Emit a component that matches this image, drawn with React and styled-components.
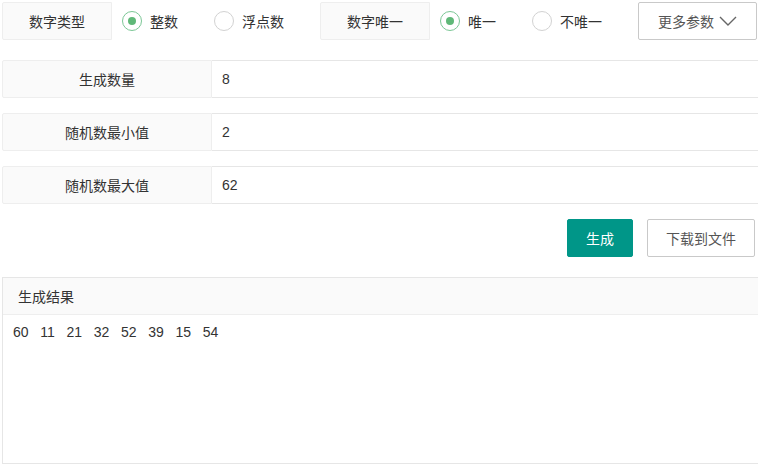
import React from "react";
import styled, { createGlobalStyle } from "styled-components";

const Global = createGlobalStyle`
  html, body { margin: 0; padding: 0; background: #fff; overflow: hidden; }
  body { font-family: "Liberation Sans", "Noto Sans CJK SC", sans-serif; font-size: 14px; color: #333; }
  * { box-sizing: border-box; }
`;

const Page = styled.div`
  width: 758px;
  height: 467px;
  padding: 2px 2px 0 2px;
  overflow: hidden;
`;

const Toolbar = styled.div`
  display: flex;
  align-items: center;
  height: 38px;
`;

const Label = styled.div`
  display: flex;
  align-items: center;
  justify-content: center;
  width: ${(p) => p.$w || 110}px;
  height: 38px;
  flex-shrink: 0;
  margin-left: ${(p) => p.$ml || 0}px;
  background: #fafafa;
  border: 1px solid #eee;
  border-radius: 2px 0 0 2px;
  color: #333;
`;

const RadioItem = styled.div`
  display: flex;
  align-items: center;
  margin: 0 26px 0 10px;
  color: #333;
  white-space: nowrap;
`;

const RadioIcon = styled.span`
  width: 20px;
  height: 20px;
  border-radius: 50%;
  border: 1.5px solid ${(p) => (p.$on ? "#7cc796" : "#d2d2d2")};
  display: inline-flex;
  align-items: center;
  justify-content: center;
  margin-right: 8px;
  &::after {
    content: "";
    display: ${(p) => (p.$on ? "block" : "none")};
    width: 8px;
    height: 8px;
    border-radius: 50%;
    background: #5fb878;
  }
`;

const GhostButton = styled.button`
  display: inline-flex;
  align-items: center;
  justify-content: center;
  height: 38px;
  padding: 0 ${(p) => p.$px || 18}px;
  background: #fff;
  border: 1px solid #c9c9c9;
  border-radius: 2px;
  color: #555;
  font: inherit;
  font-size: 14px;
  white-space: nowrap;
  flex-shrink: 0;
  margin-left: ${(p) => p.$ml || 0}px;
`;

const PrimaryButton = styled(GhostButton)`
  background: #009688;
  border-color: #009688;
  color: #fff;
`;

const Fields = styled.div`
  margin-top: 20px;
  display: flex;
  flex-direction: column;
  gap: 15px;
  width: 800px;
`;

const FieldRow = styled.div`
  display: flex;
  height: 38px;
`;

const FieldValue = styled.div`
  flex: 1;
  display: flex;
  align-items: center;
  padding-left: 10px;
  border: 1px solid #e6e6e6;
  border-left: none;
  color: #333;
`;

const Actions = styled.div`
  display: flex;
  justify-content: flex-end;
  margin-top: 15px;
  padding-right: 1px;
`;

const Result = styled.div`
  margin-top: 20px;
  width: 800px;
  border: 1px solid #e6e6e6;
  height: 187px;
  display: flex;
  flex-direction: column;
`;

const ResultHeader = styled.div`
  height: 37px;
  display: flex;
  align-items: center;
  padding-left: 15px;
  background: #fafafa;
  border-bottom: 1px solid #eee;
  color: #333;
`;

const ResultBody = styled.div`
  flex: 1;
  padding: 7px 10px;
  white-space: pre;
  color: #333;
  line-height: 20px;
`;

const Chevron = () => (
  <svg width="18" height="10" viewBox="0 0 18 10" style={{ marginLeft: 5 }}>
    <path d="M1 1 L9 9 L17 1" fill="none" stroke="#666" strokeWidth="1.4" />
  </svg>
);

const Radio = ({ on, children }) => (
  <RadioItem>
    <RadioIcon $on={on} />
    {children}
  </RadioItem>
);

const fields = [
  ["生成数量", "8"],
  ["随机数最小值", "2"],
  ["随机数最大值", "62"],
];

const numbers = [60, 11, 21, 32, 52, 39, 15, 54];

export default function App() {
  return (
    <Page>
      <Global />
      <Toolbar>
        <Label>数字类型</Label>
        <Radio on>整数</Radio>
        <Radio>浮点数</Radio>
        <Label $ml={10}>数字唯一</Label>
        <Radio on>唯一</Radio>
        <Radio>不唯一</Radio>
        <GhostButton $ml={10} $px={19}>
          更多参数
          <Chevron />
        </GhostButton>
      </Toolbar>
      <Fields>
        {fields.map(([k, v]) => (
          <FieldRow key={k}>
            <Label $w={210}>{k}</Label>
            <FieldValue>{v}</FieldValue>
          </FieldRow>
        ))}
      </Fields>
      <Actions>
        <PrimaryButton>生成</PrimaryButton>
        <GhostButton $ml={14}>下载到文件</GhostButton>
      </Actions>
      <Result>
        <ResultHeader>生成结果</ResultHeader>
        <ResultBody>{numbers.join("   ")}</ResultBody>
      </Result>
    </Page>
  );
}
